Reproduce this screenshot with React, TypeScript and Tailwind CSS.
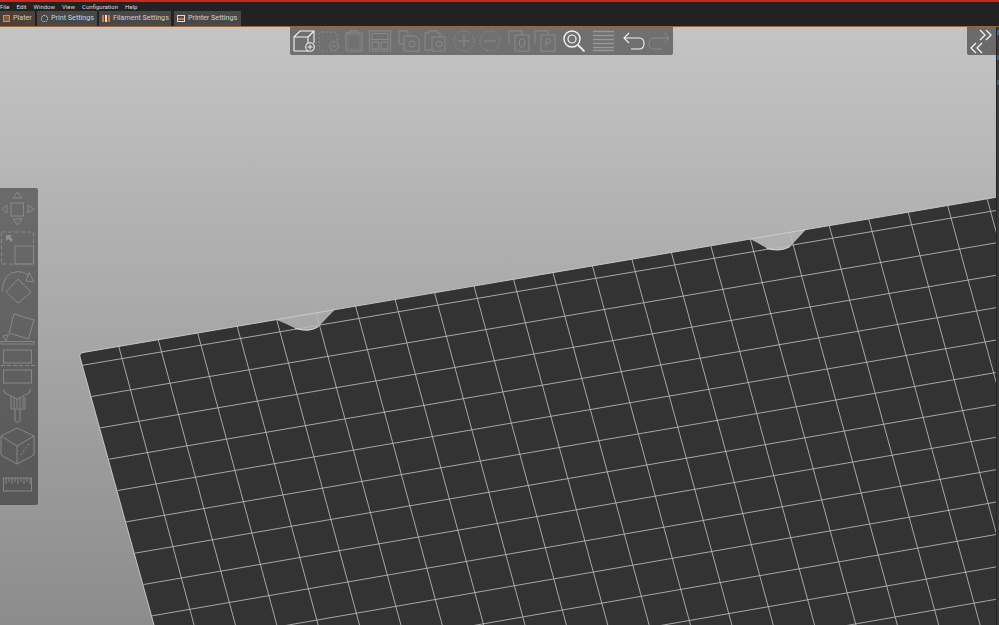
import { ReactNode } from "react";

const menuItems = ["File", "Edit", "Window", "View", "Configuration", "Help"];

// bed geometry, measured from the picture
const topY = (x: number) => 353 - 0.17 * (x - 80);
const verticals = Array.from({ length: 23 }, (_, k) => {
  const i = k + 1;
  const x = 79.3 + 39.47 * i;
  return { x1: x, y1: topY(x), x2: 152.7 + 41.37 * i, y2: 625 };
});
const horizontals = Array.from({ length: 13 }, (_, j) => ({
  x1: 83 + 8.65 * j,
  y1: 365.2 + 31.33 * j,
  x2: 996,
  y2: 210.5 + 32.4 * j,
}));

const bedPath =
  "M80 357 Q79 353.5 83 352.5 L276 319.7 Q285 323 295 328.3 Q302 330.5 308 330.2 Q314 329.5 318.5 326.7 Q326 319 335 309.6 L750 239.1 Q758 243 766.7 248.3 Q772 250.2 778.3 250 Q785 249.5 790 246.7 L806 229.6 L996 197.3 L996 625 L154 625 Z";

function Bed() {
  return (
    <svg className="absolute inset-0 h-full w-full" viewBox="0 27 996 598" preserveAspectRatio="none">
      <path d={bedPath} fill="#333333" />
      <g stroke="#bcbcbc" strokeWidth="0.85" fill="none">
        {verticals.map((l, i) => (
          <line key={i} {...l} />
        ))}
        {horizontals.map((l, j) => (
          <line key={j} {...l} />
        ))}
      </g>
      <path d="M80 357 Q79 353.5 83 352.5 L996 197.3 M80 357 L154 625" stroke="#cfcfcf" strokeWidth="0.9" fill="none" />
      <path d="M295 328.3 Q302 330.5 308 330.2 Q314 329.5 318.5 326.7 M766.7 248.3 Q772 250.2 778.3 250 Q785 249.5 790 246.7" stroke="#dcdcdc" strokeWidth="1" fill="none" />
    </svg>
  );
}

function Tab({ icon, label, w, active }: { icon: ReactNode; label: string; w: string; active?: boolean }) {
  return (
    <div
      className={`flex h-[15px] items-center gap-[3px] pl-[3px] text-[7.2px] whitespace-nowrap text-[#d0d0d0] ${w} ${
        active ? "bg-[#4c4038]" : "bg-[#484848]"
      }`}
    >
      {icon}
      <span>{label}</span>
    </div>
  );
}

function Glyph({ children, stroke = "#8a8a8a", w = 22, className = "" }: { children: ReactNode; stroke?: string; w?: number; className?: string }) {
  return (
    <svg width={w} height="22" viewBox={`0 0 ${w} 22`} fill="none" stroke={stroke} strokeWidth="1" className={`shrink-0 ${className}`}>
      {children}
    </svg>
  );
}

function Toolbar() {
  return (
    <div className="absolute left-[290px] top-0 flex h-[28px] w-[383px] items-center rounded-b-[2px] bg-[#707070] pl-[3px]">
      {/* add */}
      <Glyph stroke="#f2f2f2">
        <path d="M1 7 L7 1 H21 V13 M1 7 H15 V21 H1 Z M15 7 L21 1" strokeWidth="1.1" />
        <circle cx="17" cy="17" r="4.3" fill="#707070" strokeWidth="1.1" />
        <path d="M14.5 17 H19.5 M17 14.5 V19.5" />
      </Glyph>
      {/* delete */}
      <Glyph className="ml-[3px]">
        <rect x="1" y="2" width="18" height="19" rx="3" strokeDasharray="2 2" />
        <circle cx="16" cy="16" r="4.5" fill="#707070" />
        <path d="M13.5 16 H18.5" />
      </Glyph>
      {/* delete all */}
      <Glyph w={18} className="ml-[5px]">
        <path d="M1 3 H17 V21 H1 Z M1 3 H5 V1 H13 V3" />
        <path d="M3 5 H15 V19 H3 Z" stroke="#7d7d7d" />
      </Glyph>
      {/* arrange */}
      <Glyph className="ml-[6px]">
        <rect x="0.5" y="1" width="21" height="20" />
        <rect x="3" y="3.5" width="16" height="6" />
        <rect x="3" y="12" width="6.5" height="7" />
        <rect x="12" y="12" width="7" height="7" />
      </Glyph>
      {/* copy */}
      <Glyph className="ml-[7px]">
        <path d="M1 1 H10 V4 M1 1 V14 H6" />
        <path d="M6 6 H17 L21 9 V21 H6 Z" />
        <circle cx="14" cy="14" r="3" />
      </Glyph>
      {/* paste */}
      <Glyph className="ml-[4px]">
        <path d="M1 3 H5 V1 H13 V3 H16 V7 M1 3 V20 H7" />
        <path d="M8 7 H21 V21 H8 Z" />
        <circle cx="15" cy="14" r="3" />
      </Glyph>
      {/* more */}
      <Glyph className="ml-[7px]">
        <circle cx="11" cy="11" r="10" strokeDasharray="2 1.5" />
        <path d="M5 11 H17 M11 5 V17" />
      </Glyph>
      {/* fewer */}
      <Glyph className="ml-[4px]">
        <circle cx="11" cy="11" r="10" strokeDasharray="2 1.5" />
        <path d="M5 11 H17" />
      </Glyph>
      {/* split to objects */}
      <Glyph className="ml-[7px]">
        <path d="M1 14 V1 H14 V5" />
        <path d="M7 5 H21 V21 H7 Z" />
        <rect x="11.5" y="9" width="5" height="8" rx="2" />
      </Glyph>
      {/* split to parts */}
      <Glyph className="ml-[4px]">
        <path d="M1 14 V1 H14 V5" />
        <path d="M7 5 H21 V21 H7 Z" />
        <path d="M12 17 V9 H15.5 Q17 10.5 15.5 13 H12" />
      </Glyph>
      {/* search */}
      <Glyph stroke="#f2f2f2" className="ml-[7px]">
        <circle cx="9" cy="9" r="8" strokeWidth="1.4" />
        <circle cx="9" cy="9" r="4" strokeWidth="1.2" />
        <path d="M15 15 L21.5 21.5" strokeWidth="1.8" />
      </Glyph>
      {/* layers */}
      <Glyph w={21} stroke="#979797" className="ml-[8px]">
        <path d="M0 1.5 H21 M0 5.5 H21 M0 9.5 H21 M0 13.5 H21 M0 17.5 H21 M0 20.5 H21" strokeWidth="1.4" />
      </Glyph>
      {/* undo */}
      <Glyph stroke="#f2f2f2" className="ml-[9px]">
        <path d="M6 3 L1 8 L6 13 M1 8 H16 Q21 8 21 13.5 Q21 19 16 19 H8" strokeWidth="1.1" />
      </Glyph>
      {/* redo */}
      <Glyph stroke="#8a8a8a" className="ml-[3px]">
        <path d="M16 3 L21 8 L16 13 M21 8 H6 Q1 8 1 13.5 Q1 19 6 19 H14" />
      </Glyph>
    </div>
  );
}

function Tool({ h, children }: { h: number; children: ReactNode }) {
  return (
    <svg width="38" height={h} viewBox={`0 0 38 ${h}`} fill="none" stroke="#8c8c8c" strokeWidth="0.9">
      {children}
    </svg>
  );
}

function SidePanel() {
  return (
    <div className="absolute left-0 top-[161px] flex h-[317px] w-[38px] flex-col rounded-r-[2px] bg-linear-to-b from-[#6b6b6b] to-[#575757]">
      {/* move */}
      <Tool h={38}>
        <path d="M17.5 4 L22 10 H13 Z M13 31 H22 L17.5 37 Z M2 21 L7 17 V25 Z M28 17 L34 21 L28 25 Z" />
        <rect x="11" y="15" width="12.5" height="13" />
      </Tool>
      {/* scale */}
      <Tool h={42}>
        <rect x="1.5" y="6" width="32" height="32" strokeDasharray="4 2.5" />
        <rect x="15" y="20" width="18.5" height="18" />
        <path d="M6 9 H12 L10.5 11 L13 14 L11 16 L8.5 13 L6 15 Z" fill="#8f8f8f" stroke="none" />
      </Tool>
      {/* rotate */}
      <Tool h={40}>
        <path d="M18 11 L31 24 L18 35 L6 24 Z" />
        <path d="M2 24 Q3 4 18 3.5 Q24 3.5 28 7" />
        <path d="M29 4.5 L34 14 L26 13 Z" />
      </Tool>
      {/* place on face */}
      <Tool h={38}>
        <path d="M14 6 L34 12 L28.5 31 L9 25 Z" />
        <path d="M3 28 L8.5 26.5 L6 33 Z" />
        <rect x="1" y="33.5" width="33" height="2.5" />
      </Tool>
      {/* cut */}
      <Tool h={40}>
        <rect x="3.5" y="4" width="28" height="13" />
        <path d="M1 19.5 H35" strokeDasharray="4 2" />
        <rect x="3.5" y="24" width="28" height="13" />
      </Tool>
      {/* paint */}
      <Tool h={39}>
        <path d="M3 3 L5 7 L17 13 L29 7 L31 3" />
        <path d="M11 11 V23 H25 V11" />
        <path d="M14 12 V22 M17 13 V22 M20 12 V22 M23 11 V22" />
        <path d="M15 23 V35 Q17.5 38 20 35 V23" />
      </Tool>
      {/* cube */}
      <Tool h={42}>
        <path d="M17 3 L34 11 V30 L17 39 L1 30 V11 Z" />
        <path d="M1 11 L17 21 L34 11 M17 21 V39" />
        <path d="M21 30 L30 17" strokeDasharray="2 2" />
      </Tool>
      {/* measure */}
      <Tool h={38}>
        <rect x="3.5" y="11" width="28" height="13" />
        <path d="M6 11 V17 M9 11 V15 M12 11 V17 M15 11 V15 M18 11 V17 M21 11 V15 M24 11 V17 M27 11 V15 M30 11 V17" />
      </Tool>
    </div>
  );
}

export default function App() {
  return (
    <div className="flex h-[625px] w-[999px] flex-col overflow-hidden bg-[#222222] font-['Roboto',sans-serif]">
      <div className="h-[2px] bg-[#c9281d]" />
      <div className="flex h-[9px] items-center gap-[7px] text-[6px] leading-none text-[#d8d8d8]">
        {menuItems.map((m) => (
          <span key={m} className="whitespace-nowrap">
            {m}
          </span>
        ))}
      </div>
      <div className="flex h-[15px] bg-[#222222]">
        <div className="border-b border-[#d5792f]">
          <Tab
            active
            w="w-[35px]"
            label="Plater"
            icon={<span className="block h-[7px] w-[7px] border border-[#e8873a] bg-[#8a5a38]" />}
          />
        </div>
        <div className="ml-[2px]">
          <Tab
            w="w-[60px]"
            label="Print Settings"
            icon={<span className="ml-[1px] block h-[7px] w-[7px] rounded-full border border-dotted border-[#e0e0e0]" />}
          />
        </div>
        <div className="ml-[2px]">
          <Tab
            w="w-[72px]"
            label="Filament Settings"
            icon={
              <span className="flex h-[7px] w-[8px] items-stretch gap-[1px]">
                <span className="w-[2px] bg-[#d8782f]" />
                <span className="w-[2px] bg-[#e8e0d0]" />
                <span className="w-[2px] bg-[#d8782f]" />
              </span>
            }
          />
        </div>
        <div className="ml-[3px]">
          <Tab
            w="w-[67px]"
            label="Printer Settings"
            icon={
              <span className="flex h-[7px] w-[8px] flex-col justify-center border border-[#dddddd]">
                <span className="h-[2px] bg-[#d8782f]" />
              </span>
            }
          />
        </div>
      </div>
      <div className="h-[1px] bg-[#9a6438]" />
      <div className="flex flex-1">
        <div className="relative flex-1 bg-linear-to-b from-[#c4c4c4] to-[#8c8c8c]">
          <Bed />
          <Toolbar />
          <SidePanel />
          <div className="absolute right-0 top-0 h-[28px] w-[29px] rounded-bl-[2px] bg-[#6b6b6b]">
            <svg width="29" height="28" viewBox="0 0 29 28" fill="none" stroke="#f4f4f4" strokeWidth="1.3">
              <path d="M13 3 L18 8 L13 13 M19 3 L24 8 L19 13 M9 16 L4 21 L9 26 M15 16 L10 21 L15 26" />
            </svg>
          </div>
        </div>
        <div className="flex w-[3px] flex-col border-l border-[#222222] bg-[#3a3a3a] pt-[3px]">
          <div className="h-[5px] bg-[#3f6488]" />
          <div className="mt-[20px] h-[5px] bg-[#3f6488]" />
          <div className="mt-[20px] h-[5px] bg-[#3f6488]" />
        </div>
      </div>
    </div>
  );
}
